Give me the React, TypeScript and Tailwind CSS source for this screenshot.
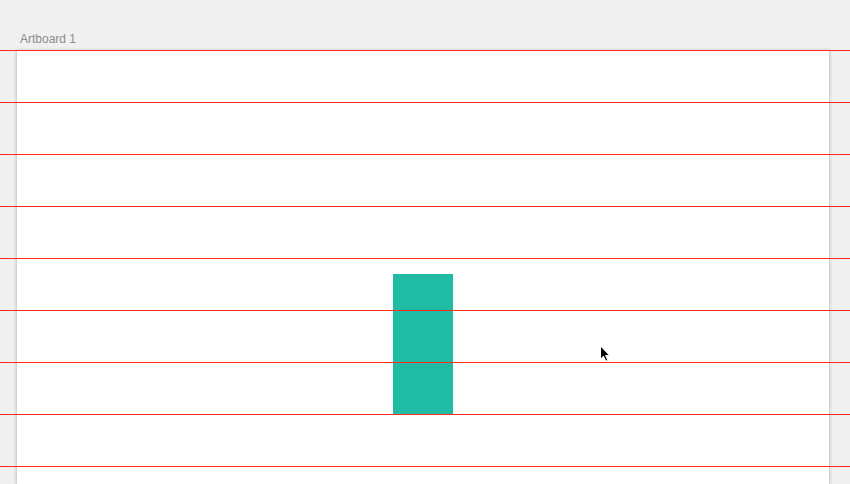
import React from "react";

export default function App() {
  const lines = [0, 1, 2, 3, 4, 5, 6, 7, 8];
  return (
    <div className="relative w-[850px] h-[484px] overflow-hidden bg-[#f0f0f0]" style={{ fontFamily: '"Liberation Sans", Arial, sans-serif' }}>
      <div className="h-[51px] pl-[20px] pt-[32px] text-[12px] leading-[14px] text-[#8c8c8c]">Artboard 1</div>
      <div className="ml-[17px] w-[812px] h-[433px] bg-white shadow-[0_0_3px_1px_rgba(0,0,0,0.2)] pt-[223px] pl-[376px]">
        <div className="w-[60px] h-[140px] bg-[#20bba5]" />
      </div>
      <div className="absolute left-0 right-0 top-[50px] flex flex-col gap-[51px]">
        {lines.map((i) => (
          <div key={i} className="h-px bg-[#ff2a1a]" />
        ))}
      </div>
      <svg className="absolute left-[599px] top-[345px]" width="14" height="18" viewBox="0 0 14 18">
        <path d="M1.5 1 L1.5 14 L4.5 11.2 L6.8 16.2 L8.8 15.3 L6.6 10.4 L10.6 10.4 Z" fill="#000" stroke="#fff" strokeWidth="1" />
      </svg>
    </div>
  );
}
